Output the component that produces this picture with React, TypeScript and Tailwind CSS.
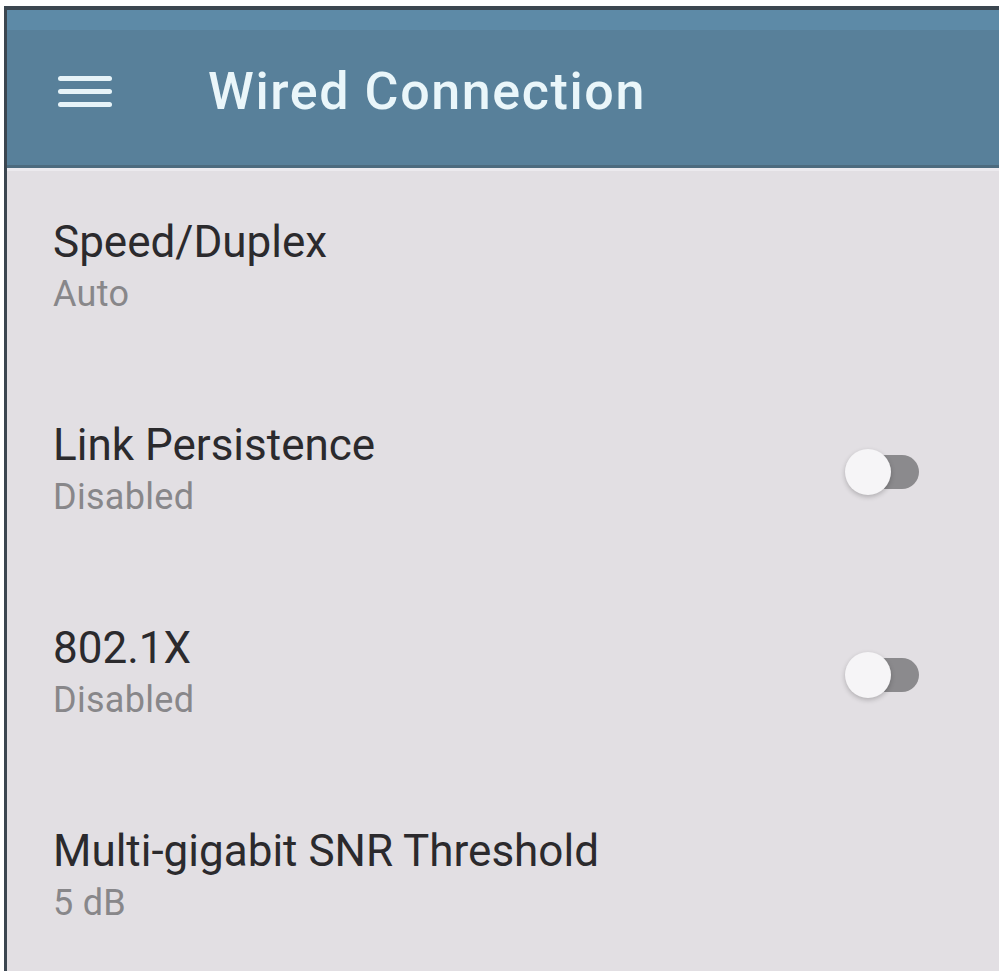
import React from "react";

const font = { fontFamily: "Roboto, 'Noto Sans', sans-serif" };

interface SettingRowProps {
  title: string;
  value: string;
  toggle?: boolean;
}

const Toggle: React.FC = () => (
  <div className="relative h-[46px] w-[80px] shrink-0">
    <div className="absolute right-[4px] top-[6px] h-[34px] w-[64px] rounded-full bg-[#8b8a8d]" />
    <div className="absolute left-[2px] top-0 h-[46px] w-[46px] rounded-full bg-[#f6f5f7] shadow-[0_2px_5px_rgba(0,0,0,0.22)]" />
  </div>
);

const SettingRow: React.FC<SettingRowProps> = ({ title, value, toggle }) => (
  <div className="flex h-[203px] shrink-0 items-center pl-[46px] pr-[76px]">
    <div className="flex flex-1 flex-col pb-[16px]">
      <p className="text-[44px] leading-[54px] text-[#2b2a2d]">{title}</p>
      <p className="mt-[4px] text-[36px] leading-[42px] tracking-[0.3px] text-[#88878a]">{value}</p>
    </div>
    {toggle && (
      <div className="mb-[8px]">
        <Toggle />
      </div>
    )}
  </div>
);

const settings: SettingRowProps[] = [
  { title: "Speed/Duplex", value: "Auto" },
  { title: "Link Persistence", value: "Disabled", toggle: true },
  { title: "802.1X", value: "Disabled", toggle: true },
  { title: "Multi-gigabit SNR Threshold", value: "5 dB" },
];

const App: React.FC = () => {
  return (
    <div className="h-[971px] w-[1004px] overflow-hidden bg-white pl-[4px] pr-[5px] pt-[6px]" style={font}>
      <div className="flex h-full flex-col overflow-hidden border-l-[3px] border-t-[4px] border-[#3b4650] bg-[#e2dfe3]">
        <header className="flex h-[158px] shrink-0 flex-col border-b-[3px] border-[#4d6b7e] bg-[#58809a]">
          <div className="h-[20px] bg-[#5d8aa7]" />
          <div className="flex flex-1 items-center pb-[12px]">
            <div className="ml-[51px] flex w-[54px] flex-col gap-[8px]">
              <span className="h-[5px] rounded-full bg-[#e6f3f8]" />
              <span className="h-[5px] rounded-full bg-[#e6f3f8]" />
              <span className="h-[5px] rounded-full bg-[#e6f3f8]" />
            </div>
            <h1 className="ml-[96px] text-[52px] font-medium leading-none tracking-[1.6px] text-[#eaf6fa]">
              Wired Connection
            </h1>
          </div>
        </header>
        <div className="h-[3px] shrink-0 bg-[#eceaee]" />
        <div className="flex shrink-0 flex-col">
          {settings.map((s) => (
            <SettingRow key={s.title} {...s} />
          ))}
        </div>
      </div>
    </div>
  );
};

export default App;
